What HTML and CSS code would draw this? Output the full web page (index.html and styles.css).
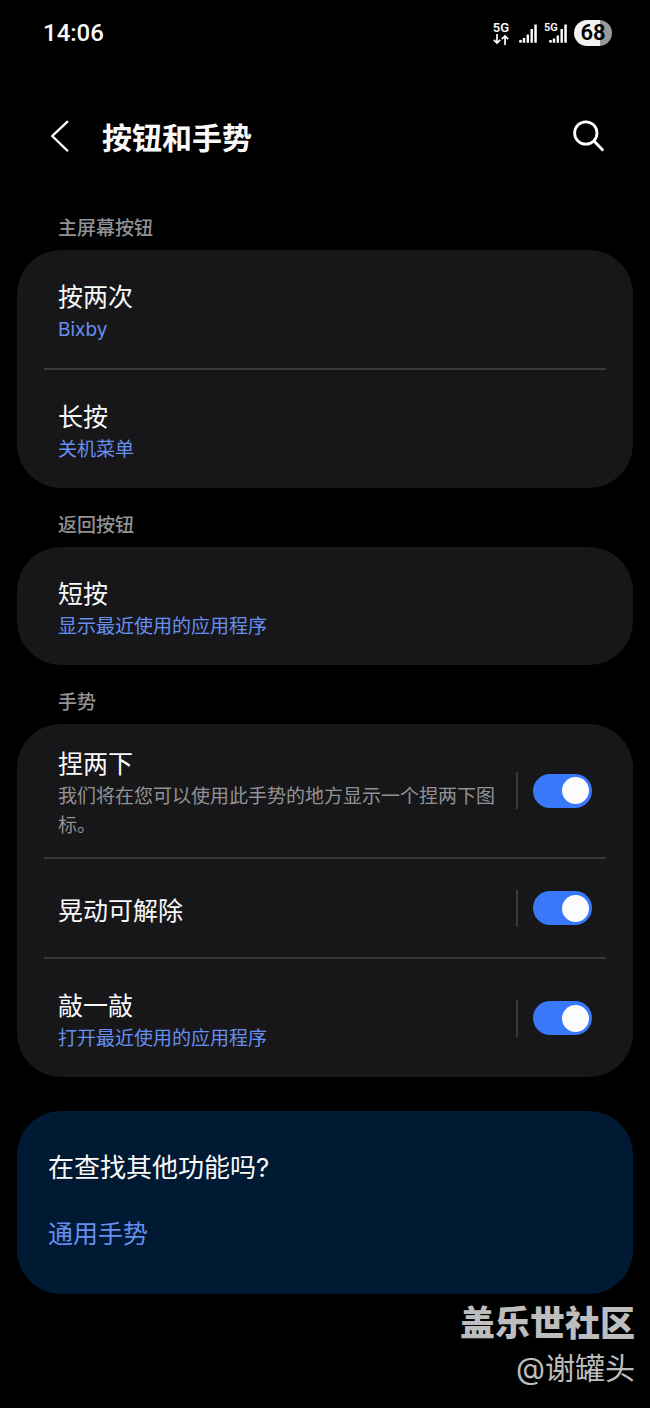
FILE: index.html
```html
<!DOCTYPE html>
<html lang="zh-CN">
<head>
    <meta charset="UTF-8">
    <meta name="viewport" content="width=device-width, initial-scale=1.0">
    <title>按钮和手势</title>
    <link rel="stylesheet" href="styles.css">
</head>
<body>
    <div class="status-bar">
        <span class="clock">14:06</span>
        <div class="status-icons">
            <div class="network">
                <span class="network-type">5G</span>
                <svg width="16" height="11" viewBox="0 0 16 11" fill="none" stroke="#fff" stroke-width="1.7">
                    <path d="M4 0v9M0.800 5.800L4 9l3.200-3.200M12 11V2M8.800 5.200L12 2l3.200 3.200"/>
                </svg>
            </div>
            <svg class="signal" width="18" height="19" viewBox="0 0 18 19" fill="#fff">
                <circle cx="1.500" cy="17.2" r="1.500"/>
                <path d="M3.800 14h2.400v4.700h-2.400zM7.600 10.500h2.400v8.200h-2.400zM11.500 5h2.400v13.700h-2.400zM15.300 0.500h2.500v18.200h-2.500z"/>
            </svg>
            <div class="signal-second">
                <span class="signal-badge">5G</span>
                <svg width="18" height="19" viewBox="0 0 18 19" fill="#fff">
                    <circle cx="1.500" cy="17.2" r="1.500"/>
                    <path d="M3.800 14.500h2.400v4.200h-2.400zM7.600 11.500h2.400v7.200h-2.400zM11.500 5h2.400v13.700h-2.400zM15.300 0.500h2.500v18.200h-2.500z"/>
                </svg>
            </div>
            <span class="battery">68</span>
        </div>
    </div>

    <header class="header">
        <button class="icon-button" type="button" aria-label="返回">
            <svg width="20" height="32" viewBox="0 0 20 32" fill="none" stroke="#fff" stroke-width="2.4" stroke-linecap="round" stroke-linejoin="round">
                <path d="M17.200 1.800L2.200 16l15 14.500"/>
            </svg>
        </button>
        <h1 class="title">按钮和手势</h1>
        <button class="icon-button" type="button" aria-label="搜索">
            <svg width="32" height="32" viewBox="0 0 32 32" fill="none" stroke="#fff" stroke-width="2.8" stroke-linecap="round">
                <circle cx="12.800" cy="13" r="11.200"/>
                <path d="M21 21l8.500 8.800"/>
            </svg>
        </button>
    </header>

    <main>
        <h2 class="section-label">主屏幕按钮</h2>
        <div class="card">
            <a class="row row-value" href="#">
                <span class="row-text">
                    <span class="row-title">按两次</span>
                    <span class="row-sub blue">Bixby</span>
                </span>
            </a>
            <a class="row row-value" href="#">
                <span class="row-text">
                    <span class="row-title">长按</span>
                    <span class="row-sub blue">关机菜单</span>
                </span>
            </a>
        </div>

        <h2 class="section-label">返回按钮</h2>
        <div class="card">
            <a class="row row-value" href="#">
                <span class="row-text">
                    <span class="row-title">短按</span>
                    <span class="row-sub blue">显示最近使用的应用程序</span>
                </span>
            </a>
        </div>

        <h2 class="section-label">手势</h2>
        <div class="card">
            <div class="row">
                <label class="row-text" for="pinch">
                    <span class="row-title">捏两下</span>
                    <span class="row-sub">我们将在您可以使用此手势的地方显示一个捏两下图标。</span>
                </label>
                <span class="separator"></span>
                <input class="switch" type="checkbox" id="pinch" checked>
            </div>
            <div class="row">
                <label class="row-text" for="shake">
                    <span class="row-title">晃动可解除</span>
                </label>
                <span class="separator"></span>
                <input class="switch" type="checkbox" id="shake" checked>
            </div>
            <div class="row row-value">
                <label class="row-text" for="knock">
                    <span class="row-title">敲一敲</span>
                    <span class="row-sub blue">打开最近使用的应用程序</span>
                </label>
                <span class="separator"></span>
                <input class="switch" type="checkbox" id="knock" checked>
            </div>
        </div>

        <div class="card suggestion">
            <h2 class="suggestion-title">在查找其他功能吗?</h2>
            <a class="suggestion-link" href="#">通用手势</a>
        </div>
    </main>

    <footer class="credit">
        <p class="community">盖乐世社区</p>
        <p class="author">@谢罐头</p>
    </footer>
</body>
</html>
```
FILE: styles.css
```css
* {
    margin: 0;
    padding: 0;
    box-sizing: border-box;
}

body {
    font-family: Inter, 'Noto Sans CJK SC', sans-serif;
    background-color: #000;
    color: #fafafa;
}

svg {
    display: block;
}

/* Status bar */
.status-bar {
    display: flex;
    justify-content: space-between;
    align-items: center;
    height: 66px;
    padding: 0 38px 0 43px;
    font-family: Roboto, sans-serif;
}

.clock {
    font-size: 24px;
    font-weight: 500;
}

.status-icons {
    display: flex;
    align-items: center;
}

.network {
    display: flex;
    flex-direction: column;
    align-items: center;
    margin-right: 10px;
}

.network-type {
    font-size: 13px;
    font-weight: 600;
    line-height: 13px;
}

.signal {
    margin-right: 12px;
}

.signal-second {
    position: relative;
    margin-right: 7px;
}

.signal-badge {
    position: absolute;
    top: -2px;
    left: -5px;
    font-size: 11px;
    font-weight: 600;
    line-height: 11px;
}

.battery {
    width: 38px;
    height: 26px;
    border-radius: 13px;
    background: linear-gradient(to right, #f2f2f2 68%, #999 68%);
    color: #000;
    font-size: 22px;
    font-weight: 600;
    line-height: 26px;
    text-align: center;
}

/* Header */
.header {
    display: flex;
    align-items: center;
    height: 140px;
    margin-bottom: 2px;
    padding: 0 45px 0 50px;
}

.icon-button {
    background: none;
    border: none;
    cursor: pointer;
}

.title {
    flex: 1;
    margin-left: 32px;
    padding-top: 4px;
    font-size: 30px;
    font-weight: 700;
    line-height: 40px;
}

/* Setting cards */
main {
    padding: 0 17px;
}

.section-label {
    margin-top: 17px;
    padding-left: 41px;
    color: #929296;
    font-size: 19px;
    font-weight: 500;
    line-height: 42px;
}

.section-label:first-child {
    margin-top: 0;
}

.card {
    border-radius: 44px;
    background-color: #17171a;
    padding: 0 27px;
}

.row {
    display: flex;
    align-items: center;
    min-height: 100px;
    padding: 0 14px;
    color: inherit;
    text-decoration: none;
}

.row + .row {
    border-top: 2px solid #39393c;
}

.row-text {
    flex: 1;
    padding: 22px 0 17px;
}

.row-value .row-text {
    padding: 29px 0 24px;
}

.row-title,
.row-sub {
    display: block;
}

.row-title {
    font-size: 25px;
    line-height: 36px;
}

.row-sub {
    color: #929296;
    font-size: 19px;
    line-height: 29px;
}

.blue {
    color: #668ff0;
}

.separator {
    width: 2px;
    height: 37px;
    margin: 0 15px 0 16px;
    background-color: #39393c;
}

.switch {
    appearance: none;
    display: flex;
    align-items: center;
    width: 59px;
    height: 34px;
    padding: 0 3px;
    border-radius: 17px;
    background-color: #5a5a5e;
    cursor: pointer;
}

.switch::before {
    content: '';
    width: 27px;
    height: 27px;
    border-radius: 50%;
    background-color: #fcfcff;
}

.switch:checked {
    justify-content: flex-end;
    background-color: #3878fb;
}

/* Suggestion card */
.suggestion {
    margin-top: 34px;
    padding: 37px 31px 40px;
    background-color: #001a33;
}

.suggestion-title {
    margin-bottom: 26px;
    font-size: 26px;
    font-weight: 400;
    line-height: 40px;
}

.suggestion-link {
    display: block;
    color: #668ff0;
    font-size: 25px;
    line-height: 40px;
    text-decoration: none;
}

/* Credit */
.credit {
    padding: 6px 15px 14px;
    color: #bdbdbd;
    text-align: right;
}

.community {
    font-size: 35px;
    font-weight: 900;
    line-height: 46px;
}

.author {
    font-size: 30px;
    font-weight: 400;
    line-height: 44px;
}
```
